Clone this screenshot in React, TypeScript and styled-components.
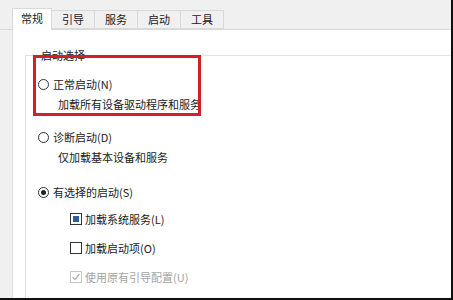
import styled, { createGlobalStyle } from "styled-components"

const GlobalStyle = createGlobalStyle`
    body {
        margin: 0;
        font-family: "Noto Sans CJK SC", "Liberation Sans", sans-serif;
        overflow: hidden;
    }
`

const Frame = styled.div`
    position: relative;
    width: 453px;
    height: 300px;
    box-sizing: border-box;
    background: #f0f0f0;
    border-right: 2px solid #111;
    border-bottom: 2px solid #111;
    display: flex;
    flex-direction: column;
    font-size: 11px;
    color: #1a1a1a;
`

const TabBar = styled.div`
    height: 29px;
    padding-left: 12px;
    display: flex;
    align-items: flex-end;
    border-bottom: 1px solid #d9d9d9;
`

const Tab = styled.div<{ $active?: boolean }>`
    height: ${(p) => (p.$active ? "22px" : "19px")};
    margin-bottom: ${(p) => (p.$active ? "-1px" : "0")};
    padding: 0 ${(p) => (p.$active ? "8px" : "10px")};
    box-sizing: border-box;
    display: flex;
    align-items: center;
    line-height: 1;
    background: ${(p) => (p.$active ? "#fff" : "#f0f0f0")};
    border: 1px solid #d9d9d9;
    border-bottom: ${(p) => (p.$active ? "none" : "1px solid #d9d9d9")};
    border-left: ${(p) => (p.$active ? "1px solid #d9d9d9" : "none")};
    padding-bottom: ${(p) => (p.$active ? "2px" : "0")};
`

const Panel = styled.div`
    flex: 1;
    margin-left: 12px;
    background: #fff;
    border-left: 1px solid #e0e0e0;
    padding: 18px 0 0 12px;
`

const GroupBox = styled.fieldset`
    margin: 0;
    padding: 6px 0 0 12px;
    height: 100%;
    box-sizing: border-box;
    border: none;
    border-top: 1px solid #e3e3e3;
    border-left: 1px solid #dcdcdc;
`

const Legend = styled.legend`
    padding: 0 1px;
    margin-left: 2px;
    line-height: 14px;
`

const OptionRow = styled.div<{ $gap?: number }>`
    display: flex;
    align-items: center;
    gap: 4px;
    height: 20px;
    margin-top: ${(p) => p.$gap ?? 0}px;
`

const Radio = styled.span<{ $checked?: boolean }>`
    width: 11px;
    height: 11px;
    box-sizing: border-box;
    border: 1px solid #333;
    border-radius: 50%;
    display: flex;
    align-items: center;
    justify-content: center;

    &::after {
        content: "";
        width: 5px;
        height: 5px;
        border-radius: 50%;
        background: ${(p) => (p.$checked ? "#222" : "transparent")};
    }
`

const Desc = styled.div`
    height: 20px;
    line-height: 20px;
    padding-left: 20px;
`

const CheckRow = styled.div<{ $gap?: number; $disabled?: boolean }>`
    display: flex;
    align-items: center;
    gap: 3px;
    height: 20px;
    padding-left: 32px;
    margin-top: ${(p) => p.$gap ?? 0}px;
    color: ${(p) => (p.$disabled ? "#a3a3a3" : "inherit")};
`

const Box = styled.span<{ $state: "filled" | "empty" | "disabled" }>`
    width: 12px;
    height: 12px;
    box-sizing: border-box;
    border: 1px solid ${(p) => (p.$state === "disabled" ? "#c4c4c4" : "#333")};
    display: flex;
    align-items: center;
    justify-content: center;

    &::after {
        content: "";
        width: 6px;
        height: 6px;
        background: ${(p) => (p.$state === "filled" ? "#2b5f94" : "transparent")};
        display: ${(p) => (p.$state === "filled" ? "block" : "none")};
    }
`

const Highlight = styled.div`
    position: absolute;
    left: 33px;
    top: 55px;
    width: 168px;
    height: 61px;
    box-sizing: border-box;
    border: 3px solid #d21f29;
    pointer-events: none;
`

const Check = () => (
    <svg width="10" height="10" viewBox="0 0 10 10">
        <polyline points="1.5,5 4,7.5 8.5,2" fill="none" stroke="#b0b0b0" strokeWidth="1.2" />
    </svg>
)

const tabs = ["常规", "引导", "服务", "启动", "工具"]

export default function App() {
    return (
        <>
            <GlobalStyle />
            <Frame>
                <TabBar>
                    {tabs.map((t, i) => (
                        <Tab key={t} $active={i === 0}>{t}</Tab>
                    ))}
                </TabBar>

                <Panel>
                    <GroupBox>
                        <Legend>启动选择</Legend>

                        <OptionRow $gap={6}>
                            <Radio />
                            <span>正常启动(N)</span>
                        </OptionRow>
                        <Desc>加载所有设备驱动程序和服务</Desc>

                        <OptionRow $gap={13}>
                            <Radio />
                            <span>诊断启动(D)</span>
                        </OptionRow>
                        <Desc>仅加载基本设备和服务</Desc>

                        <OptionRow $gap={15}>
                            <Radio $checked />
                            <span>有选择的启动(S)</span>
                        </OptionRow>

                        <CheckRow $gap={7}>
                            <Box $state="filled" />
                            <span>加载系统服务(L)</span>
                        </CheckRow>
                        <CheckRow $gap={9}>
                            <Box $state="empty" />
                            <span>加载启动项(O)</span>
                        </CheckRow>
                        <CheckRow $gap={9} $disabled>
                            <Box $state="disabled"><Check /></Box>
                            <span>使用原有引导配置(U)</span>
                        </CheckRow>
                    </GroupBox>
                </Panel>

                <Highlight />
            </Frame>
        </>
    )
}
